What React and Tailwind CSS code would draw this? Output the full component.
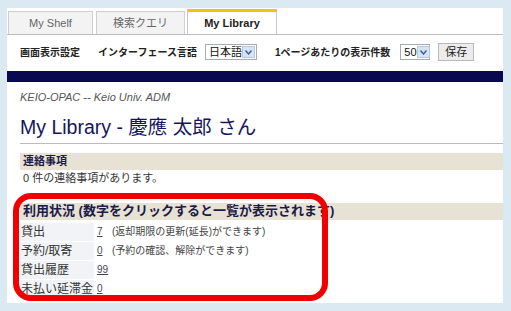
// My Library page (KEIO-OPAC)

const jp = "font-['Liberation_Sans','Noto_Sans_CJK_JP',sans-serif]";

const Tab = ({ label, active, w }) =>
  active ? (
    <div className={`${w} h-[25px] flex items-center justify-center bg-white border-x border-[#c8c8c8] border-t-[3px] border-t-[#f2c300] text-[11px] font-bold text-[#222]`}>
      {label}
    </div>
  ) : (
    <div className={`${w} h-[23px] mt-[2px] flex items-center justify-center bg-[#f3f3f3] border border-b-0 border-[#cfcfcf] text-[11px] text-[#666] mr-[2px]`}>
      {label}
    </div>
  );

const Select = ({ value, w }) => (
  <div className={`${w} h-[16px] flex items-center justify-between whitespace-nowrap border border-[#a5acb5] bg-white pl-[3px] pr-[1px] text-[11px] text-[#111]`}>
    <span>{value}</span>
    <span className="w-[13px] h-[12px] shrink-0 flex items-center justify-center bg-[#d7e4f5] border border-[#b5c6de]">
      <svg width="7" height="5" viewBox="0 0 7 5">
        <path d="M0.5 0.5 L3.5 4 L6.5 0.5" fill="none" stroke="#3a5a9a" strokeWidth="1.4" />
      </svg>
    </span>
  </div>
);

const rows = [
  { label: "貸出", value: "7", note: "(返却期限の更新(延長)ができます)" },
  { label: "予約/取寄", value: "0", note: "(予約の確認、解除ができます)" },
  { label: "貸出履歴", value: "99", note: "" },
  { label: "未払い延滞金", value: "0", note: "" },
];

export default function App() {
  return (
    <div className={`w-[511px] h-[311px] bg-[#dbeaf2] pt-[8px] pl-[7px] pr-[8px] pb-[8px] ${jp}`}>
      <div className="relative h-full bg-white flex flex-col">
        {/* Tabs */}
        <div className="flex items-end pl-[1px] pt-[1px] border-b border-[#bdbdbd]">
          <Tab label="My Shelf" w="w-[85px] mr-[3px]" />
          <Tab label="検索クエリ" w="w-[89px]" />
          <Tab label="My Library" w="w-[90px]" active />
        </div>

        {/* Display settings */}
        <div className="flex items-center h-[28px] mt-[3px] pl-[13px] text-[10px] font-bold text-[#222] whitespace-nowrap">
          <span>画面表示設定</span>
          <span className="ml-[18px]">インターフェース言語</span>
          <span className="ml-[8px] font-normal">
            <Select value="日本語" w="w-[52px]" />
          </span>
          <span className="ml-[18px]">1ページあたりの表示件数</span>
          <span className="ml-[10px] font-normal">
            <Select value="50" w="w-[30px]" />
          </span>
          <button className="ml-[8px] h-[18px] px-[6px] bg-[#ececec] border border-[#b9b9b9] text-[11px] font-normal text-[#222]">
            保存
          </button>
        </div>

        <div className="h-[11px] mt-[5px] bg-[#09094f]" />

        <div className="pl-[13px] pr-0">
          <div className="mt-[7px] text-[11px] italic text-[#555]">KEIO-OPAC -- Keio Univ. ADM</div>
          <h1 className="mt-[9px] pb-[4px] border-b border-[#bbbbbb] text-[19.5px] leading-[24px] text-[#15155a]">
            My Library - 慶應 太郎 さん
          </h1>

          <div className="mt-[9px] h-[17px] flex items-center pl-[3px] bg-[#e8e2d5] text-[11px] font-bold text-[#1b1b4a]">
            連絡事項
          </div>
          <div className="h-[17px] flex items-center pl-[3px] text-[11px] text-[#333]">0 件の連絡事項があります。</div>

          <div className="mt-[16px] h-[17px] flex items-center pl-[3px] bg-[#e8e2d5] text-[13px] font-bold text-[#1b1b4a] whitespace-nowrap">
            利用状況 (数字をクリックすると一覧が表示されます)
          </div>
          <div className="flex flex-col gap-[1px] mt-[3px]">
            {rows.map((r) => (
              <div key={r.label} className="flex h-[18px] items-center text-[11px]">
                <div className="w-[74px] h-full flex items-center pl-[1px] bg-[#f1f3f6] text-[#333] text-[12px] whitespace-nowrap">
                  {r.label}
                </div>
                <div className="ml-[3px] w-[14px] text-[#445] underline text-[10px]">{r.value}</div>
                <div className="ml-[1px] text-[10px] text-[#444]">{r.note}</div>
              </div>
            ))}
          </div>
        </div>

        {/* Red highlight */}
        <div className="absolute left-[6px] top-[185px] w-[315px] h-[108px] border-[6px] border-[#f00000] rounded-[18px] pointer-events-none" />
      </div>
    </div>
  );
}
